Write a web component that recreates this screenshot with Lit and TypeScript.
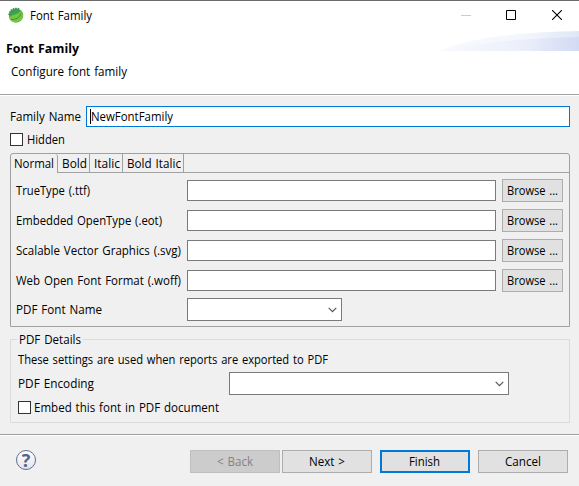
import { LitElement, html, css, svg, nothing } from "lit";
import { customElement, property } from "lit/decorators.js";

/** One line of dialog text, set to a given advance width. Baseline is 12px below the top. */
@customElement("ui-text")
class UiText extends LitElement {
  @property() text = "";
  @property({ type: Number }) width = 0;

  static styles = css`
    :host { display: block; flex: none; height: 16px; }
    svg { display: block; height: 16px; overflow: visible; }
    text {
      font-family: "Open Sans", "Noto Sans", "Noto Sans CJK KR", sans-serif;
      font-size: 12.75px;
      word-spacing: 1px;
      fill: currentColor;
    }
  `;

  render() {
    return html`<svg width=${this.width}>
      ${svg`<text x="0" y="12" textLength=${this.width} lengthAdjust="spacingAndGlyphs">${this.text}</text>`}
    </svg>`;
  }
}

@customElement("ui-button")
class UiButton extends LitElement {
  @property() label = "";
  @property({ type: Number }) width = 0;
  @property({ reflect: true }) kind = "";

  static styles = css`
    :host { display: block; flex: none; width: 90px; }
    :host([kind="browse"]) { width: 61px; }
    .face {
      box-sizing: border-box;
      height: 23px;
      display: flex;
      justify-content: center;
      padding: 3px 1px 0 0;
      border: 1px solid #adadad;
      background: #e1e1e1;
      color: #000;
    }
    :host([kind="disabled"]) .face { background: #ccc; border-color: #bfbfbf; color: #838383; }
    :host([kind="default"]) .face { border: 2px solid #0078d7; padding-top: 2px; }
  `;

  render() {
    return html`<div class="face"><ui-text .text=${this.label} .width=${this.width}></ui-text></div>`;
  }
}

@customElement("ui-combo")
class UiCombo extends LitElement {
  static styles = css`
    :host {
      box-sizing: border-box;
      flex: none;
      display: flex;
      justify-content: flex-end;
      align-items: flex-start;
      height: 23px;
      padding: 8px 4px 0 0;
      background: #fff;
      border: 1px solid #7a7a7a;
    }
    svg { display: block; }
  `;

  render() {
    return html`<svg width="9" height="6" viewBox="0 0 9 6">
      <path d="M.7 .9 4.5 4.6 8.3 .9" fill="none" stroke="#555" stroke-width="1.2" />
    </svg>`;
  }
}

const label = (text: string, width: number, cls = "") =>
  html`<ui-text class=${cls || nothing} .text=${text} .width=${width}></ui-text>`;

@customElement("app-root")
class AppRoot extends LitElement {
  static styles = css`
    :host { display: block; }
    * { box-sizing: border-box; }
    .dialog {
      width: 579px;
      height: 486px;
      display: flex;
      flex-direction: column;
      overflow: hidden;
      background: #f0f0f0;
      border-top: 1px solid #6b6b6b;
      color: #000;
    }
    .header {
      position: relative;
      height: 95px;
      flex: none;
      background: #fff;
      border-bottom: 1px solid #fff;
      box-shadow: inset 0 -1px #a0a0a0;
    }
    .titlebar { height: 30px; display: flex; padding: 6px 17px 0 8px; }
    .titlebar ui-text { margin: 1px auto 0 6px; }
    .titlebar svg { display: block; }
    .wintools { margin-top: 3px; display: flex; gap: 35px; }
    .wintools .close { margin-left: 1px; }
    .swoosh { position: absolute; right: 0; top: 29px; display: block; }
    .heading { margin: 10px 0 0 6px; font-weight: 700; }
    .desc { margin: 7px 0 0 11px; }
    .body { flex: none; height: 338px; padding: 10px 9px 0 10px; }
    .name { display: flex; }
    .name ui-text { margin: 3px 5px 0 0; }
    .field {
      height: 21px;
      flex: 1;
      background: #fff;
      border: 1px solid #7a7a7a;
    }
    .focused { display: flex; border-color: #0078d7; padding: 2px 0 0 3px; }
    .focused ui-text { margin: 0; }
    .caret { width: 1px; height: 15px; background: #000; }
    .check { display: flex; }
    .box { width: 13px; height: 13px; background: #fff; border: 1px solid #333; }
    .hidden { margin-top: 6px; gap: 4px; }
    .hidden ui-text, .embed ui-text { margin-top: -1px; height: 14px; }
    .folder {
      margin-top: 7px;
      height: 174px;
      border: 1px solid #a0a0a0;
      border-radius: 3px 3px 0 0;
    }
    .tabs { display: flex; height: 19px; }
    .tab {
      border-right: 1px solid #a0a0a0;
      border-bottom: 1px solid #a0a0a0;
      padding: 2px 2px 0 4px;
    }
    .selected { border-bottom: none; border-top-right-radius: 3px; padding: 2px 3px 0; }
    .rest { flex: 1; border-bottom: 1px solid #a0a0a0; }
    .rows { padding: 6px 6px 0 5px; display: flex; flex-direction: column; gap: 7px; }
    .row { display: grid; grid-template-columns: 171px 309px 61px; column-gap: 0; height: 23px; }
    .row ui-text { margin-top: 4px; }
    .row .field { margin-top: 1px; }
    .row ui-button { margin-left: 6px; }
    .row.last { margin-top: -1px; }
    .row.last ui-combo { width: 155px; }
    .group {
      position: relative;
      margin-top: 12px;
      height: 84px;
      border: 1px solid #dcdcdc;
      padding: 12px 0 0 7px;
    }
    .legend {
      position: absolute;
      left: 6px;
      top: -8px;
      padding: 0 2px;
      background: #f0f0f0;
    }
    .encoding { display: flex; justify-content: space-between; height: 23px; margin-top: 4px; padding-right: 60px; }
    .encoding ui-text { margin-top: 4px; }
    .encoding ui-combo { width: 280px; }
    .embed { margin-top: 6px; gap: 4px; }
    .embed ui-text { margin-left: -1px; }
    .footer {
      flex: 1;
      border-top: 1px solid #a0a0a0;
      box-shadow: inset 0 1px #fff;
      display: flex;
      padding: 15px 11px 0 16px;
    }
    .help {
      width: 20px;
      height: 20px;
      margin-right: auto;
      border: 1px solid #5d6f92;
      border-radius: 50%;
      background: linear-gradient(#fff, #e2e5ea);
      display: flex;
      align-items: center;
      justify-content: center;
      color: #4f6690;
      font: 700 18px/24px "Open Sans", "Noto Sans", sans-serif;
    }
    .footer .next { margin-left: 2px; }
    .footer .gap { margin-left: 8px; }
  `;

  private files: [string, number][] = [
    ["TrueType (.ttf)", 74],
    ["Embedded OpenType (.eot)", 146],
    ["Scalable Vector Graphics (.svg)", 165],
    ["Web Open Font Format (.woff)", 165],
  ];

  render() {
    return html`<div class="dialog">
      <div class="header">
        <svg class="swoosh" width="139" height="21" viewBox="0 0 139 21">
          <defs>
            <linearGradient id="a"><stop offset="0" stop-color="#f8fafe" /><stop offset=".6" stop-color="#f3f6fc" /><stop offset="1" stop-color="#dfe7f7" /></linearGradient>
            <linearGradient id="b"><stop offset="0" stop-color="#f8fafe" /><stop offset=".6" stop-color="#eceffa" /><stop offset="1" stop-color="#d2dbf4" /></linearGradient>
          </defs>
          <path d="M0 21C24 8 82 2 139 1V21Z" fill="url(#a)" />
          <path d="M0 21C45 11 92 8 139 7V21Z" fill="url(#b)" />
        </svg>
        <div class="titlebar">
          <svg width="16" height="17" viewBox="0 0 16 17">
            <circle cx="8" cy="8.5" r="7" fill="#3f9f50" />
            <path d="M1 8A7.200 7.200 0 0 1 12 2.500" fill="none" stroke="#318b50" stroke-width="1.500" stroke-dasharray="1.500 .9" />
            <path d="M1.200 11.500C2.200 6.500 9.600 9 13.200 3.200c3 3.400 2.900 8.100-.8 10.900-3.400 2.500-9.200 1.700-11.200-2.600Z" fill="#76c442" />
            <path d="M3 12.400c4.200.5 8.800-1.400 10-6.200" fill="none" stroke="#2f8a44" stroke-width=".9" />
          </svg>
          ${label("Font Family", 62)}
          <div class="wintools">
            <svg width="10" height="10"><path d="M0 5.500H10" stroke="#ccc" /></svg>
            <svg width="10" height="10"><path d="M.5 .5h9v9h-9z" fill="none" stroke="#000" /></svg>
            <svg class="close" width="10" height="10" viewBox="0 0 10 10"><path d="M0 0 10 10M10 0 0 10" stroke="#000" stroke-width="1.100" /></svg>
          </div>
        </div>
        ${label("Font Family", 73, "heading")}
        ${label("Configure font family", 116, "desc")}
      </div>

      <div class="body">
        <div class="name">
          ${label("Family Name", 71)}
          <div class="field focused"><div class="caret"></div>${label("NewFontFamily", 82)}</div>
        </div>
        <div class="check hidden"><div class="box"></div>${label("Hidden", 38)}</div>

        <div class="folder">
          <div class="tabs">
            <div class="tab selected">${label("Normal", 40)}</div>
            <div class="tab">${label("Bold", 25)}</div>
            <div class="tab">${label("Italic", 26)}</div>
            <div class="tab">${label("Bold Italic", 54)}</div>
            <div class="rest"></div>
          </div>
          <div class="rows">
            ${this.files.map(
              ([text, width]) => html`<div class="row">
                ${label(text, width)}
                <div class="field"></div>
                <ui-button kind="browse" label="Browse ..." .width=${51}></ui-button>
              </div>`,
            )}
            <div class="row last">${label("PDF Font Name", 86)}<ui-combo></ui-combo></div>
          </div>
        </div>

        <div class="group">
          ${label("PDF Details", 62, "legend")}
          ${label("These settings are used when reports are exported to PDF", 310)}
          <div class="encoding">${label("PDF Encoding", 76)}<ui-combo></ui-combo></div>
          <div class="check embed"><div class="box"></div>${label("Embed this font in PDF document", 185)}</div>
        </div>
      </div>

      <div class="footer">
        <div class="help">?</div>
        <ui-button kind="disabled" label="&lt; Back" .width=${36}></ui-button>
        <ui-button class="next" label="Next &gt;" .width=${36}></ui-button>
        <ui-button class="gap" kind="default" label="Finish" .width=${31}></ui-button>
        <ui-button class="gap" label="Cancel" .width=${36}></ui-button>
      </div>
    </div>`;
  }
}
